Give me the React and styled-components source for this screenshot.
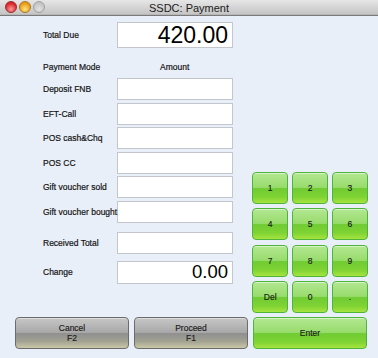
import React from "react";
import styled, { createGlobalStyle } from "styled-components";

const GlobalStyle = createGlobalStyle`
  html, body {
    margin: 0;
    padding: 0;
    background: #e9eff9;
  }
  * {
    box-sizing: border-box;
  }
`;

const Window = styled.div`
  width: 378px;
  height: 358px;
  display: flex;
  flex-direction: column;
  background: #e9eff9;
  font-family: "Liberation Sans", Arial, sans-serif;
  color: #1e1e1e;
  overflow: hidden;
`;

const TitleBar = styled.div`
  position: relative;
  height: 16px;
  display: flex;
  align-items: center;
  justify-content: center;
  background: linear-gradient(#e6e6e6, #c6c6c6 90%, #b2b2b2);
  border-bottom: 1px solid #7a7a7a;
  font-size: 11px;
  color: #202020;
`;

const Lights = styled.div`
  position: absolute;
  left: 5px;
  top: 1px;
  display: flex;
  gap: 2px;
`;

const Light = styled.span`
  width: 12px;
  height: 12px;
  border-radius: 50%;
  border: 1px solid ${(p) => p.$edge};
  background: radial-gradient(circle at 50% 72%, ${(p) => p.$glow} 0%, ${(p) => p.$color} 68%);
`;

const Content = styled.div`
  flex: 1;
  display: flex;
  flex-direction: column;
  padding: 6px 10px 9px 15px;
`;

const Upper = styled.div`
  display: flex;
  align-items: flex-start;
  justify-content: space-between;
`;

const Form = styled.div`
  display: flex;
  flex-direction: column;
  padding-left: 28px;
`;

const Row = styled.div`
  display: grid;
  grid-template-columns: 74px 116px;
  align-items: center;
  height: ${(p) => p.$h || 22}px;
  margin-top: ${(p) => p.$mt || 0}px;
  font-size: 8.5px;
  white-space: nowrap;
`;

const Label = styled.div`
  position: relative;
  z-index: 1;
  color: #151515;
  -webkit-text-stroke: 0.2px #151515;
`;

const HeaderAmount = styled(Label)`
  padding-left: 43px;
`;

const Field = styled.div`
  height: 100%;
  background: #fff;
  border: 1px solid #c3c6cc;
  padding-right: 4px;
  font-size: ${(p) => p.$fs || 12}px;
  line-height: 1;
  display: flex;
  align-items: center;
  justify-content: flex-end;
  color: #000;
`;

const Keypad = styled.div`
  width: 116px;
  margin-top: 150px;
  display: grid;
  grid-template-columns: repeat(3, 1fr);
  grid-auto-rows: 32px;
  column-gap: 3.5px;
  row-gap: 4.3px;
`;

const KeyBase = styled.button`
  font-family: "Liberation Sans", Arial, sans-serif;
  font-size: 8.5px;
  color: #1a1a1a;
  -webkit-text-stroke: 0.15px #1a1a1a;
  padding: 0;
  border-radius: 4px;
  cursor: pointer;
  line-height: 10px;
`;

const GreenKey = styled(KeyBase)`
  border: 1px solid #4fb53a;
  background: linear-gradient(
    #b3e792 0%,
    #98dc6c 48%,
    #70cb33 52%,
    #7fd334 80%,
    #a6e440 100%
  );
  box-shadow: inset 0 1px 0 rgba(255, 255, 255, 0.5);
`;

const GrayKey = styled(KeyBase)`
  border: 1px solid #6c6c6c;
  background: linear-gradient(
    #c6c6c6 0%,
    #a9a9a9 48%,
    #8f8f8f 52%,
    #a3a292 78%,
    #cac8a8 100%
  );
  box-shadow: inset 0 1px 0 rgba(255, 255, 255, 0.4);
`;

const Bottom = styled.div`
  display: grid;
  grid-template-columns: repeat(3, 114px);
  column-gap: 5px;
  height: 32px;
  margin-top: 4px;
`;

const payments = [
  "Deposit FNB",
  "EFT-Call",
  "POS cash&Chq",
  "POS CC",
  "Gift voucher sold",
  "Gift voucher bought",
];

const keys = ["1", "2", "3", "4", "5", "6", "7", "8", "9", "Del", "0", "."];

export default function App() {
  return (
    <>
      <GlobalStyle />
      <Window>
        <TitleBar>
          <Lights>
            <Light $color="#d8252a" $glow="#ff9a9a" $edge="#9a2a2a" />
            <Light $color="#e89b15" $glow="#ffe27a" $edge="#a87420" />
            <Light $color="#c4c4c4" $glow="#e2e2e2" $edge="#a0a0a0" />
          </Lights>
          SSDC: Payment
        </TitleBar>
        <Content>
          <Upper>
            <Form>
              <Row $h={26}>
                <Label>Total Due</Label>
                <Field $fs={23}>420.00</Field>
              </Row>
              <Row $h={12} $mt={13}>
                <Label>Payment Mode</Label>
                <HeaderAmount>Amount</HeaderAmount>
              </Row>
              {payments.map((p, i) => (
                <Row key={p} $mt={i === 0 ? 5 : 2.6}>
                  <Label>{p}</Label>
                  <Field />
                </Row>
              ))}
              <Row $mt={9}>
                <Label>Received Total</Label>
                <Field />
              </Row>
              <Row $h={23} $mt={7}>
                <Label>Change</Label>
                <Field $fs={18.5}>0.00</Field>
              </Row>
            </Form>
            <Keypad>
              {keys.map((k) => (
                <GreenKey key={k}>{k}</GreenKey>
              ))}
            </Keypad>
          </Upper>
          <Bottom>
            <GrayKey>
              Cancel
              <br />
              F2
            </GrayKey>
            <GrayKey>
              Proceed
              <br />
              F1
            </GrayKey>
            <GreenKey>Enter</GreenKey>
          </Bottom>
        </Content>
      </Window>
    </>
  );
}
